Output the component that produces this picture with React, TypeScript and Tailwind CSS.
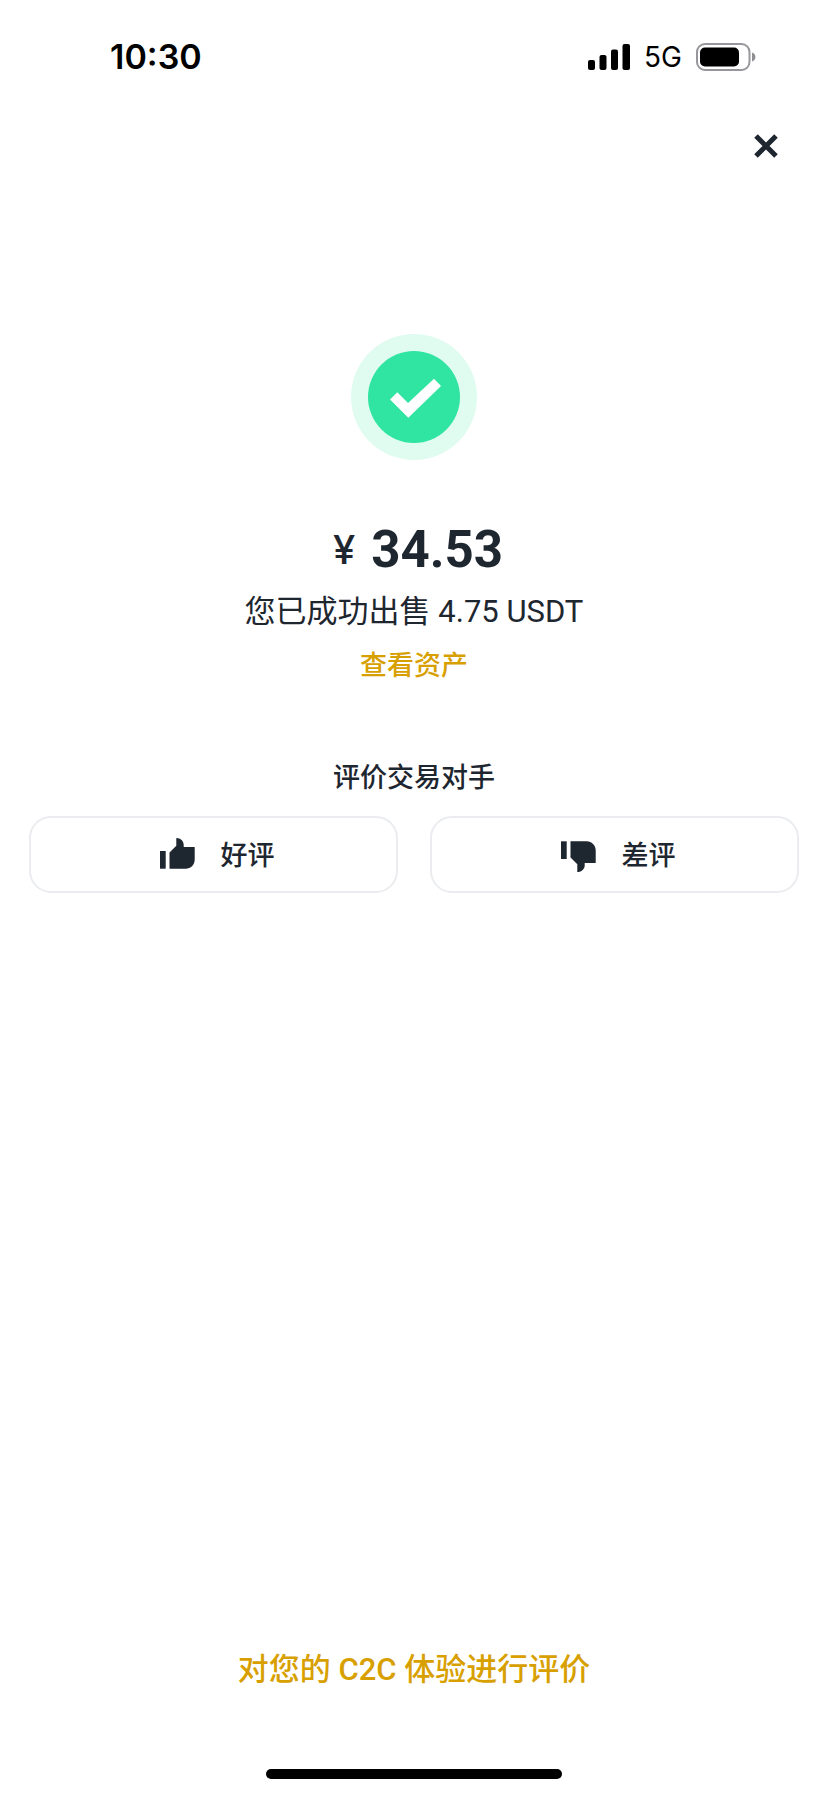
function SignalIcon() {
  return (
    <svg width="42" height="26" viewBox="0 0 42 26" fill="#000" aria-hidden="true">
      <rect x="0" y="16" width="7" height="10" rx="2" />
      <rect x="11.5" y="11" width="7" height="15" rx="2" />
      <rect x="23" y="5.5" width="7" height="20.5" rx="2" />
      <rect x="34.5" y="0" width="7.5" height="26" rx="2" />
    </svg>
  );
}

function BatteryIcon() {
  return (
    <svg width="60" height="28" viewBox="0 0 60 28" aria-hidden="true">
      <rect x="1" y="1" width="52.5" height="26" rx="8" fill="none" stroke="#97979b" strokeWidth="2" />
      <rect x="4" y="4.5" width="39" height="19" rx="5" fill="#000" />
      <path d="M56 9.5C60.5 11 60.5 17 56 18.5Z" fill="#8e8e93" />
    </svg>
  );
}

function CloseIcon() {
  return (
    <svg width="24" height="24" viewBox="0 0 24 24" fill="none" stroke="#1e2630" strokeWidth="5" aria-hidden="true">
      <path d="M2 2L22 22M22 2L2 22" />
    </svg>
  );
}

function SuccessIcon() {
  return (
    <svg width="126" height="126" viewBox="0 0 126 126" aria-hidden="true">
      <circle cx="63" cy="63" r="63" fill="#e0fbf0" />
      <circle cx="63" cy="63" r="46" fill="#30e4a1" />
      <path d="M39 65.5L46.3 58.3L57 69L83 44.7L90 52L57.3 83.7Z" fill="#fff" />
    </svg>
  );
}

function ThumbIcon({ down = false }: { down?: boolean }) {
  return (
    <svg width="48" height="48" viewBox="0 0 48 48" fill="#1e2630" aria-hidden="true">
      <g transform={down ? "matrix(1 0 0 -1 0 48)" : undefined}>
        <path d="M7 20H12.7V37.7H7Z" />
        <path d="M16.5 21.5L23.3 14.8V7C27.7 7 30.7 10 30.7 13.8V16H41.7V28.7C41.7 33.7 37.7 37.7 32.7 37.7H16.5Z" />
      </g>
    </svg>
  );
}

function RateButton({ label, down }: { label: string; down?: boolean }) {
  return (
    <button
      type="button"
      className="flex h-[77px] flex-1 items-center justify-center gap-5 rounded-[22px] border-2 border-[#eaecef] bg-white text-[27px] leading-9 font-medium"
    >
      <ThumbIcon down={down} />
      <span className="pt-[2px]">{label}</span>
    </button>
  );
}

export default function App() {
  return (
    <div className="flex min-h-screen flex-col bg-white font-[Roboto,'Noto_Sans_CJK_SC',sans-serif] text-[#1e2630]">
      <header className="flex items-center justify-between pt-[37px] pr-[72px] pl-[110px] font-[Inter,sans-serif] text-black">
        <time className="text-[34px] leading-10 font-semibold">10:30</time>
        <div className="flex items-center gap-[14px]">
          <SignalIcon />
          <span className="text-[28px] leading-10">5G</span>
          <BatteryIcon />
        </div>
      </header>

      <div className="flex justify-end pt-[49px] pr-[42px]">
        <button type="button" aria-label="关闭" className="p-2">
          <CloseIcon />
        </button>
      </div>

      <main className="flex flex-1 flex-col items-center px-[29px] pt-[168px]">
        <SuccessIcon />
        <h1 className="mt-[60px] flex items-center gap-4 pl-2 leading-[60px] font-bold">
          <span className="font-[Inter,sans-serif] text-[40px] font-medium">¥</span>
          <span className="text-[51px]">34.53</span>
        </h1>
        <p className="mt-3 text-[31px] leading-10">您已成功出售 4.75 USDT</p>
        <a href="#assets" className="mt-4 text-[27px] leading-9 font-medium text-[#d89f00]">
          查看资产
        </a>
        <h2 className="mt-[76px] text-[27px] leading-9 font-medium">评价交易对手</h2>
        <div className="mt-5 flex gap-8 self-stretch">
          <RateButton label="好评" />
          <RateButton label="差评" down />
        </div>
      </main>

      <footer className="flex flex-col items-center pb-4">
        <a href="#feedback" className="text-[31px] leading-10 font-medium text-[#d89f00]">
          对您的 C2C 体验进行评价
        </a>
        <div className="mt-[79px] h-[10px] w-[296px] rounded-full bg-black" />
      </footer>
    </div>
  );
}
